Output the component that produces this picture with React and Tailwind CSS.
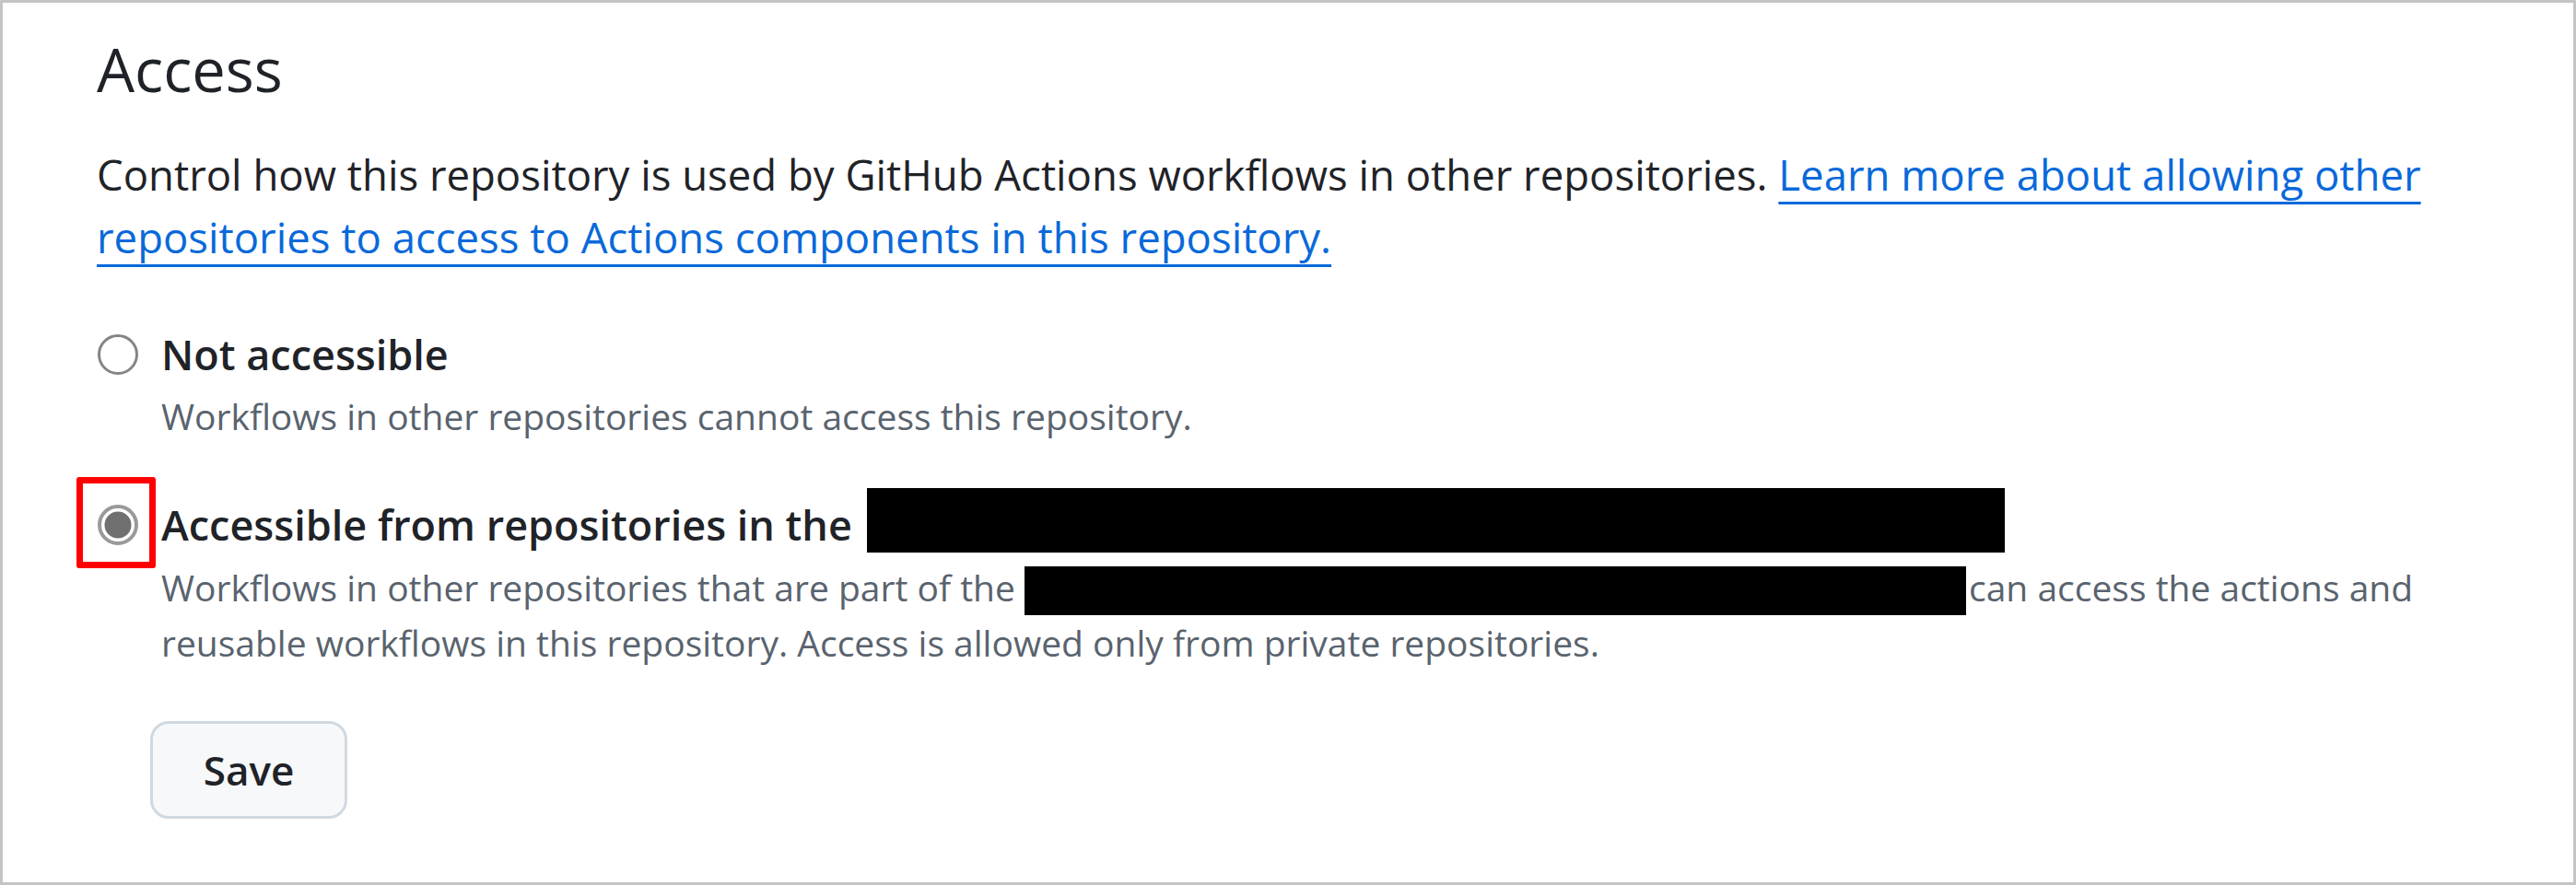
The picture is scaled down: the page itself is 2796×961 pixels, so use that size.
export default function App() {
  return (
    <div className="w-[2796px] h-[961px] border-[3px] border-[#c4c4c4] bg-white pl-[102px] pt-[28px] font-['Open_Sans',sans-serif] text-[#1f2328] overflow-hidden">
      <h2 className="text-[65px] leading-[88px] font-normal">Access</h2>
      <p className="mt-[36px] text-[45.5px] leading-[68px] whitespace-nowrap">
        Control how this repository is used by GitHub Actions workflows in other repositories.{" "}
        <a className="text-[#0969da] underline decoration-[length:3px] underline-offset-[12px]">
          Learn more about allowing other
          <br />
          repositories to access to Actions components in this repository.
        </a>
      </p>

      <div className="mt-[64px] flex">
        <div className="w-[46px] h-[60px] flex items-center">
          <svg width="46" height="46" viewBox="0 0 46 46">
            <circle cx="23" cy="23" r="20.5" fill="white" stroke="#858585" strokeWidth="3" />
          </svg>
        </div>
        <div className="ml-[24px]">
          <div className="text-[45px] font-semibold leading-[60px]">Not accessible</div>
          <div className="mt-[7px] text-[39px] leading-[60px] text-[#59636e]">
            Workflows in other repositories cannot access this repository.
          </div>
        </div>
      </div>

      <div className="mt-[48px] flex">
        <div className="mt-[10px] w-[46px] h-[60px] flex items-center relative">
          <svg width="46" height="46" viewBox="0 0 46 46">
            <circle cx="23" cy="23" r="20" fill="white" stroke="#9a9a9a" strokeWidth="4" />
            <circle cx="23" cy="23" r="14.5" fill="#707070" />
          </svg>
          <div className="absolute left-[-22px] top-[-22px] w-[86px] h-[99px] border-[7px] border-[#ff0000] rounded-[3px]" />
        </div>
        <div className="ml-[24px]">
          <div className="flex items-end h-[70px]">
            <span className="text-[45px] font-semibold leading-[60px] whitespace-nowrap">Accessible from repositories in the</span>
            <span className="ml-[16px] w-[1235px] h-[70px] bg-black shrink-0" />
          </div>
          <div className="mt-[8px] text-[39px] leading-[60px] text-[#59636e] whitespace-nowrap">
            Workflows in other repositories that are part of the{" "}
            <span className="inline-block align-bottom w-[1022px] h-[53px] bg-black" />
            <span className="ml-[3px]">can access the actions and</span>
            <br />
            reusable workflows in this repository. Access is allowed only from private repositories.
          </div>
        </div>
      </div>

      <button className="mt-[55px] ml-[58px] w-[214px] h-[106px] rounded-[20px] border-[3px] border-[#d1d9e0] bg-[#f6f8fa] text-[44px] font-semibold text-[#1f2328] flex items-center justify-center">
        Save
      </button>
    </div>
  );
}
